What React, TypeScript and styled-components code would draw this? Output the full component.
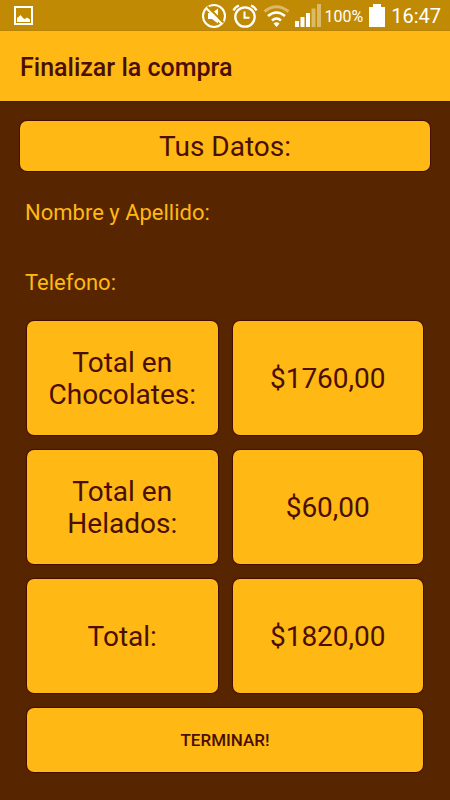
import React from "react";
import styled, { createGlobalStyle } from "styled-components";

const amber = "#ffb814";
const cocoa = "#572600";
const ink = "#4a0f00";

const GlobalStyle = createGlobalStyle`
  *, *::before, *::after { box-sizing: border-box; }
  body {
    margin: 0;
    background: ${cocoa};
    color: ${ink};
    font-family: Roboto, "Liberation Sans", sans-serif;
  }
`;

const Screen = styled.div`
  display: flex;
  flex-direction: column;
  min-height: 100vh;
`;

const StatusBar = styled.div`
  display: flex;
  align-items: center;
  justify-content: space-between;
  height: 31px;
  padding: 1px 9px 0 14px;
  background: #c18a05;
  color: #fff;
`;

const StatusGroup = styled.div<{ $gap: number }>`
  display: flex;
  align-items: center;
  gap: ${({ $gap }) => $gap}px;

  svg { display: block; flex: none; }
`;

const BatteryLevel = styled.span`
  font-size: 16px;
`;

const Clock = styled.time`
  font-size: 20px;
`;

const AppBar = styled.header`
  display: flex;
  align-items: center;
  height: 70px;
  padding: 2px 20px 0;
  background: ${amber};
  box-shadow: 0 1px 2px rgba(40, 30, 0, 0.7);
`;

const Title = styled.h1`
  margin: 0;
  font-size: 25px;
  font-weight: 500;
`;

const Content = styled.main`
  display: flex;
  flex-direction: column;
  padding: 20px 20px 28px;
`;

const SectionHeading = styled.h2`
  margin: 0;
  padding: 10px 10px 8px;
  border-radius: 7px;
  background: ${amber};
  box-shadow: 0 0 1px 1px #430e00;
  font-size: 28px;
  line-height: 32px;
  font-weight: 400;
  text-align: center;
`;

const Form = styled.form`
  display: flex;
  flex-direction: column;
`;

const Field = styled.div`
  display: flex;
  align-items: center;
  gap: 8px;
  height: 70px;
  padding: 12px 5px 0;
  color: ${amber};
  font-size: 22px;
`;

const FieldInput = styled.input`
  flex: 1;
  min-width: 0;
  padding: 0;
  border: 0;
  outline: 0;
  background: transparent;
  color: inherit;
  font: inherit;
`;

const Totals = styled.dl`
  display: flex;
  flex-direction: column;
  gap: 15px;
  margin: 10px 7px 15px;
`;

const TotalRow = styled.div`
  display: grid;
  grid-template-columns: 1fr 1fr;
  gap: 15px;
`;

const TotalCard = styled.div`
  display: flex;
  align-items: center;
  justify-content: center;
  min-height: 114px;
  margin: 0;
  padding: 12px 20px 10px;
  border-radius: 7px;
  background: ${amber};
  box-shadow: 0 0 1px 1px #430e00;
  font-size: 28px;
  line-height: 32px;
  text-align: center;
`;

const SubmitButton = styled.button`
  height: 64px;
  margin: 0 7px;
  border: 0;
  border-radius: 7px;
  background: ${amber};
  box-shadow: 0 0 1px 1px #430e00;
  color: ${ink};
  font: 500 17px Roboto, "Liberation Sans", sans-serif;
  cursor: pointer;
`;

const PictureIcon = () => (
  <svg width="20" height="20" viewBox="0 0 20 20" aria-hidden="true">
    <rect x="1" y="1" width="17" height="17" fill="none" stroke="#fff" strokeWidth="2" />
    <path d="M3 16v-4l1.500-1L6.500 9l3 3.500 1.500.5 2-1.500 3 2V16z" fill="#fff" />
  </svg>
);

const MutedIcon = () => (
  <svg width="26" height="26" viewBox="0 0 26 26" fill="none" stroke="#fff" aria-hidden="true">
    <circle cx="13" cy="13" r="11" strokeWidth="2" />
    <path d="M7 10h4l6-4.500v15L11 16H7z" fill="#fff" stroke="none" />
    <path d="M6.500 3.500l16 16" stroke="#c18a05" strokeWidth="2" />
    <path d="M5 5l16 16" strokeWidth="2" />
  </svg>
);

const AlarmIcon = () => (
  <svg width="26" height="26" viewBox="0 0 26 26" fill="none" stroke="#fff" aria-hidden="true">
    <circle cx="13" cy="14" r="9.7" strokeWidth="2.3" />
    <path d="M12.500 8.500v6.200h5" strokeWidth="2" />
    <path d="M1.500 7.500Q3 4 7 2.500M24.500 7.500Q23 4 19 2.500" strokeWidth="2.400" />
  </svg>
);

const WifiIcon = () => (
  <svg width="27" height="26" viewBox="0 0 27 26" fill="none" stroke="#fff" aria-hidden="true">
    <path d="M1.500 8.500q12-9.500 24 0" strokeWidth="3" opacity=".4" />
    <path d="M5 13q8.500-7 17 0M9 17.500q4.500-4 9 0" strokeWidth="2.600" />
    <path d="M10.500 20.500q3-2.500 6 0l-3 3.500z" fill="#fff" stroke="none" />
  </svg>
);

const SignalIcon = () => (
  <svg width="26" height="24" viewBox="0 0 26 24" fill="#fff" aria-hidden="true">
    <path d="M0 17h4v6H0zM5.500 13h4v10h-4zM11 9h4v14h-4z" />
    <path d="M16.500 4.500h4V23h-4zM22 0h4v23h-4z" opacity=".4" />
  </svg>
);

const BatteryIcon = () => (
  <svg width="16" height="24" viewBox="0 0 16 24" fill="#fff" aria-hidden="true">
    <path d="M4 0h8v3h4v20H0V3h4z" />
  </svg>
);

const fields = [
  { id: "nombre", label: "Nombre y Apellido:", type: "text" },
  { id: "telefono", label: "Telefono:", type: "tel" },
];

const totals = [
  { label: "Total en Chocolates:", amount: "$1760,00" },
  { label: "Total en Helados:", amount: "$60,00" },
  { label: "Total:", amount: "$1820,00" },
];

export default function App() {
  return (
    <Screen>
      <GlobalStyle />
      <StatusBar>
        <StatusGroup $gap={0}>
          <PictureIcon />
        </StatusGroup>
        <StatusGroup $gap={3}>
          <StatusGroup $gap={5}>
            <MutedIcon />
            <AlarmIcon />
            <WifiIcon />
            <SignalIcon />
          </StatusGroup>
          <StatusGroup $gap={6}>
            <BatteryLevel>100%</BatteryLevel>
            <BatteryIcon />
            <Clock>16:47</Clock>
          </StatusGroup>
        </StatusGroup>
      </StatusBar>
      <AppBar>
        <Title>Finalizar la compra</Title>
      </AppBar>
      <Content>
        <SectionHeading>Tus Datos:</SectionHeading>
        <Form onSubmit={(event) => event.preventDefault()}>
          {fields.map((field) => (
            <Field key={field.id}>
              <label htmlFor={field.id}>{field.label}</label>
              <FieldInput id={field.id} name={field.id} type={field.type} />
            </Field>
          ))}
          <Totals>
            {totals.map((total) => (
              <TotalRow key={total.label}>
                <TotalCard as="dt">{total.label}</TotalCard>
                <TotalCard as="dd">{total.amount}</TotalCard>
              </TotalRow>
            ))}
          </Totals>
          <SubmitButton type="submit">TERMINAR!</SubmitButton>
        </Form>
      </Content>
    </Screen>
  );
}
